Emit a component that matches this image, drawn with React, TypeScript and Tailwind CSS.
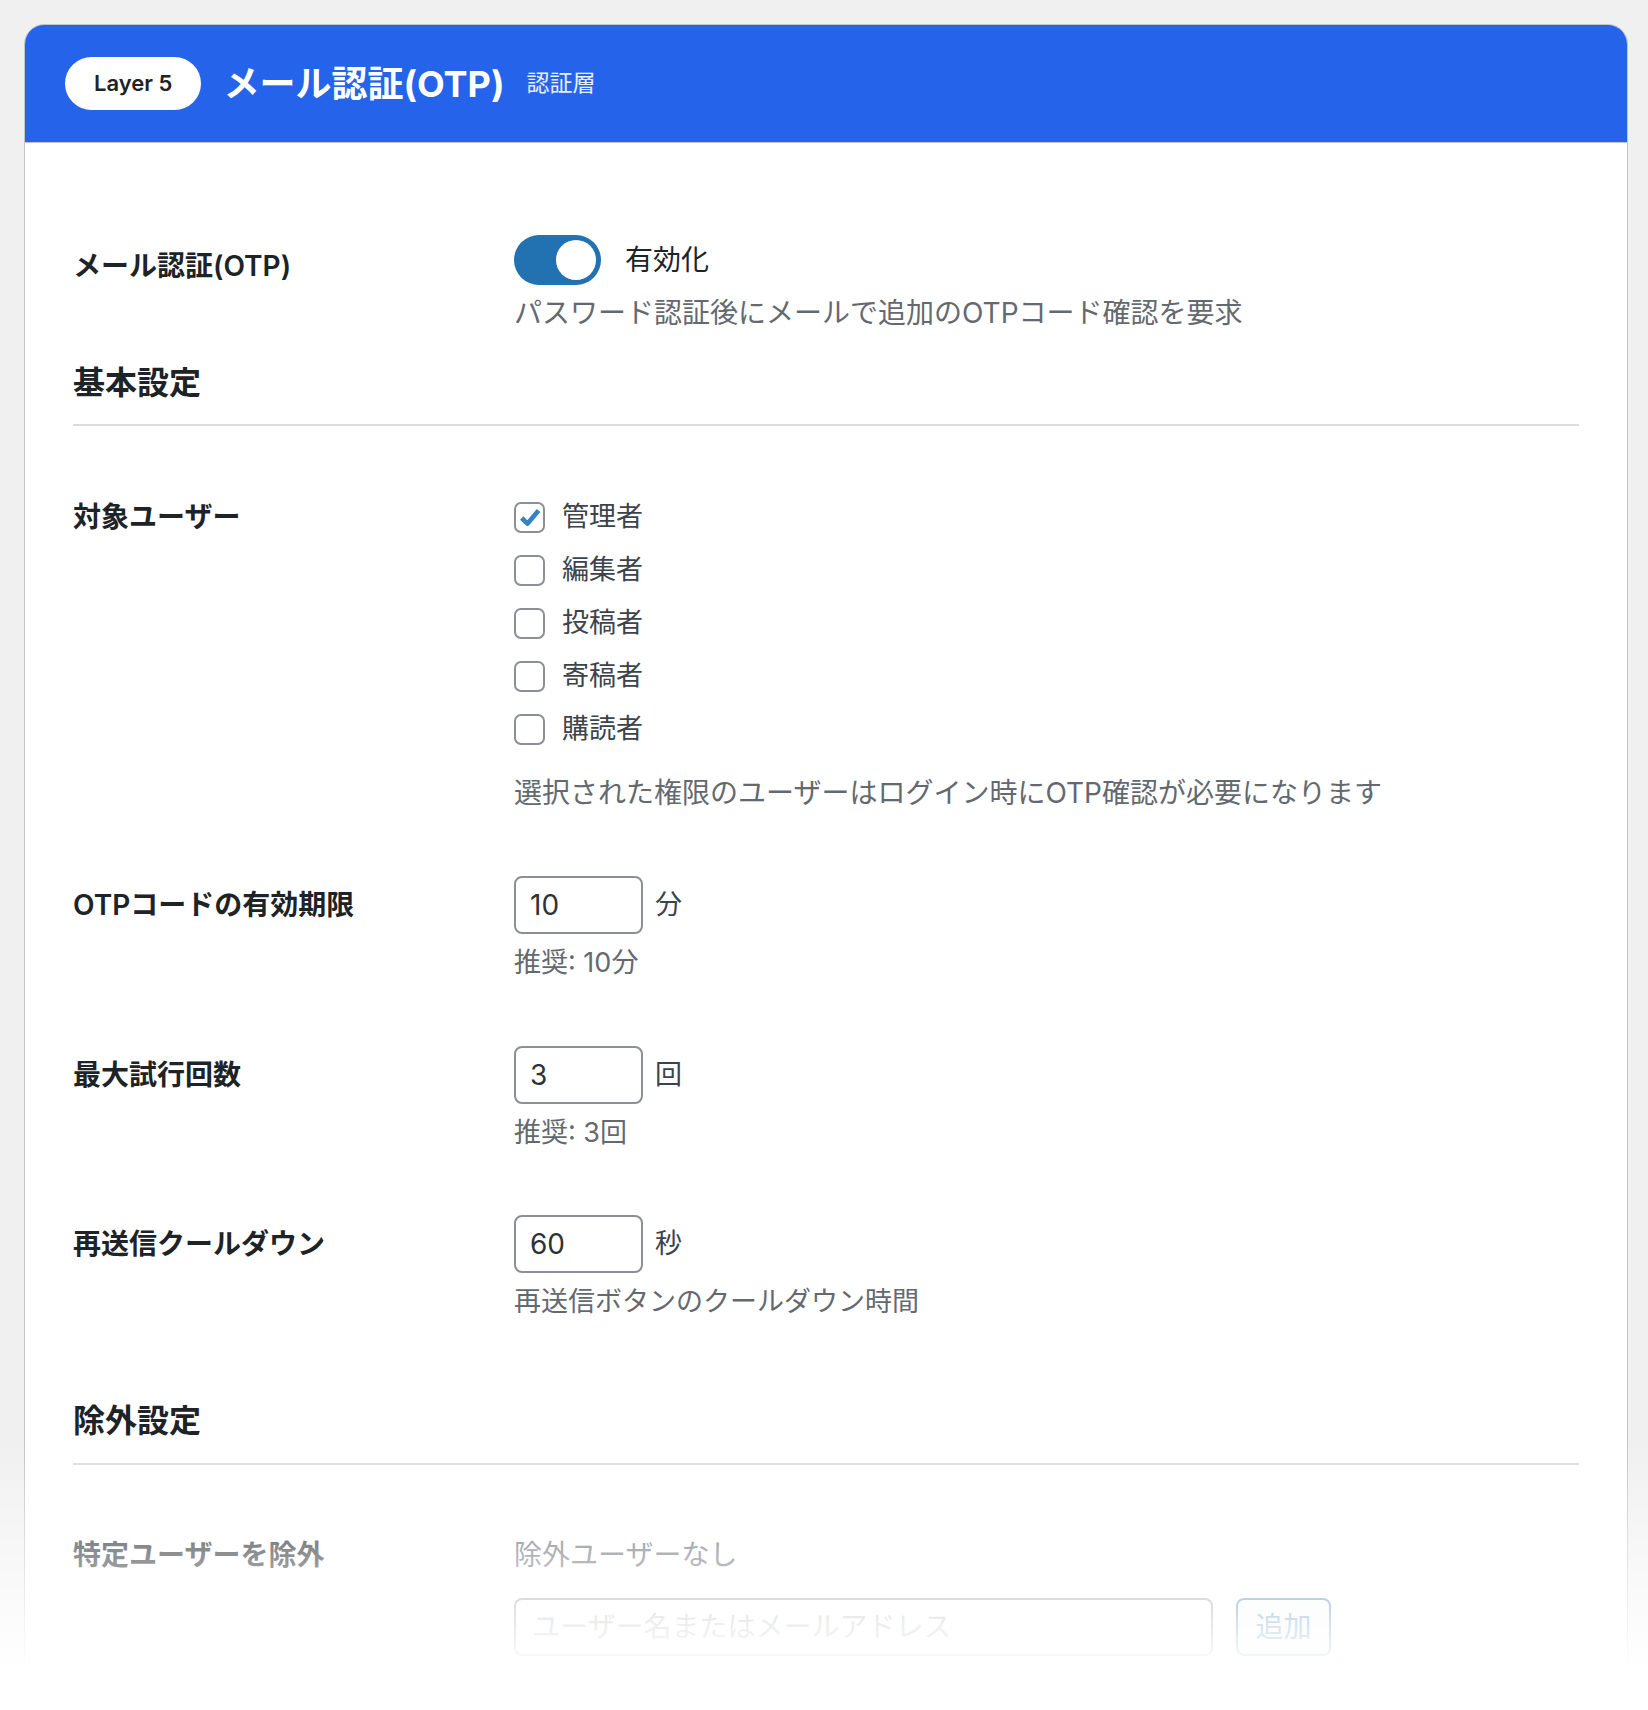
import React from 'react';

const font = "font-[family-name:Inter,'Noto_Sans_CJK_JP',sans-serif]";

const roles = [
    { name: '管理者', checked: true },
    { name: '編集者', checked: false },
    { name: '投稿者', checked: false },
    { name: '寄稿者', checked: false },
    { name: '購読者', checked: false },
];

const Checkbox: React.FC<{ checked: boolean }> = ({ checked }) => (
    <span className="w-[31px] h-[31px] rounded-[7px] border-2 border-[#8c8f94] bg-white flex items-center justify-center shrink-0">
        {checked && (
            <svg width="26" height="26" viewBox="0 0 20 20">
                <path d="M3.6 10 L8 14.4 L16.6 4.2" fill="none" stroke="#3582c4" strokeWidth="3.6" strokeLinejoin="round" />
            </svg>
        )}
    </span>
);

const NumberField: React.FC<{ value: string; unit: string; hint: string }> = ({ value, unit, hint }) => (
    <div className="flex flex-col">
        <div className="flex items-center gap-[12px]">
            <div className="w-[129px] h-[58px] rounded-[8px] border-2 border-[#8c8f94] bg-white flex items-center px-[14px] text-[28px] text-[#2c3338]">
                {value}
            </div>
            <span className="text-[27px] text-[#3c434a]">{unit}</span>
        </div>
        <p className="mt-[8px] text-[27px] leading-[42px] text-[#646970]">{hint}</p>
    </div>
);

export default function App() {
    return (
        <div className={`relative h-[1710px] overflow-hidden bg-[#f0f0f1] pt-[24px] pl-[24px] pr-[20px] ${font}`}>
            <div className="bg-white border border-[#c3c4c7] rounded-t-[20px] overflow-hidden">
                <div className="h-[118px] bg-[#2563eb] border-b border-[#c3c4c7] flex items-center pl-[40px] gap-[22px]">
                    <span className="h-[53px] px-[29px] rounded-full bg-white flex items-center text-[22px] font-semibold text-[#1d2327]">
                        Layer 5
                    </span>
                    <h1 className="text-[36px] font-bold text-white leading-none">メール認証(OTP)</h1>
                    <span className="text-[23px] text-white/90">認証層</span>
                </div>

                <div className="pt-[92px] pl-[48px] pr-[48px] pb-[200px] text-[#1d2327]">
                    {/* toggle */}
                    <div className="flex">
                        <div className="w-[441px] pt-[10px] text-[28px] leading-[42px] font-semibold">メール認証(OTP)</div>
                        <div className="flex flex-col">
                            <div className="h-[50px] flex items-center gap-[24px]">
                                <span className="w-[87px] h-[50px] rounded-full bg-[#2271b1] flex items-center justify-end pr-[5px]">
                                    <span className="w-[40px] h-[40px] rounded-full bg-white" />
                                </span>
                                <span className="text-[28px] text-[#1d2327]">有効化</span>
                            </div>
                            <p className="mt-[7px] text-[28px] leading-[42px] text-[#646970]">
                                パスワード認証後にメールで追加のOTPコード確認を要求
                            </p>
                        </div>
                    </div>

                    <h2 className="mt-[25px] text-[32px] leading-[48px] font-bold">基本設定</h2>
                    <div className="mt-[17px] h-[2px] bg-[#dcdcde]" />

                    {/* roles */}
                    <div className="flex mt-[65px]">
                        <div className="w-[441px] pt-[5px] text-[28px] leading-[42px] font-semibold">対象ユーザー</div>
                        <div className="flex flex-col">
                            {roles.map((r) => (
                                <label key={r.name} className="h-[53px] flex items-center gap-[17px]">
                                    <Checkbox checked={r.checked} />
                                    <span className="text-[27px] text-[#3c434a]">{r.name}</span>
                                </label>
                            ))}
                            <p className="mt-[16px] text-[28px] leading-[42px] text-[#646970]">
                                選択された権限のユーザーはログイン時にOTP確認が必要になります
                            </p>
                        </div>
                    </div>

                    <div className="flex mt-[62px]">
                        <div className="w-[441px] pt-[8px] text-[28px] leading-[42px] font-semibold">OTPコードの有効期限</div>
                        <NumberField value="10" unit="分" hint="推奨: 10分" />
                    </div>

                    <div className="flex mt-[62px]">
                        <div className="w-[441px] pt-[8px] text-[28px] leading-[42px] font-semibold">最大試行回数</div>
                        <NumberField value="3" unit="回" hint="推奨: 3回" />
                    </div>

                    <div className="flex mt-[61px]">
                        <div className="w-[441px] pt-[8px] text-[28px] leading-[42px] font-semibold">再送信クールダウン</div>
                        <NumberField value="60" unit="秒" hint="再送信ボタンのクールダウン時間" />
                    </div>

                    <h2 className="mt-[74px] text-[32px] leading-[48px] font-bold">除外設定</h2>
                    <div className="mt-[18px] h-[2px] bg-[#dcdcde]" />

                    <div className="flex mt-[69px]">
                        <div className="w-[441px] text-[28px] leading-[42px] font-semibold">特定ユーザーを除外</div>
                        <div className="flex flex-col">
                            <p className="text-[28px] leading-[42px] text-[#646970]">除外ユーザーなし</p>
                            <div className="mt-[22px] flex gap-[23px]">
                                <div className="w-[699px] h-[58px] rounded-[8px] border-2 border-[#8c8f94] bg-white flex items-center px-[16px] text-[28px] text-[#a7aaad]">
                                    ユーザー名またはメールアドレス
                                </div>
                                <button className="w-[95px] h-[58px] rounded-[8px] border-2 border-[#2271b1] bg-[#f6f7f7] text-[28px] text-[#2271b1]">
                                    追加
                                </button>
                            </div>
                        </div>
                    </div>
                </div>
            </div>

            {/* fade out the preview */}
            <div className="absolute left-0 right-0 top-[1440px] bottom-0 bg-[linear-gradient(to_bottom,rgba(255,255,255,0)_0px,#ffffff_230px)]" />
        </div>
    );
}
